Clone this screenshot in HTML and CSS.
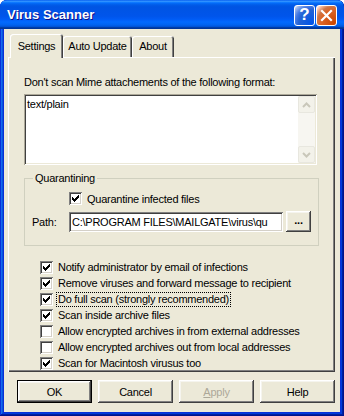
FILE: index.html
```html
<!DOCTYPE html>
<html lang="en">
<head>
    <meta charset="UTF-8">
    <title>Virus Scanner</title>
    <link rel="stylesheet" href="styles.css">
</head>
<body>
    <div class="window">
        <div class="titlebar">
            <span class="title">Virus Scanner</span>
            <div class="caption-buttons">
                <span class="cap-btn help">?</span>
                <span class="cap-btn close">
                    <svg width="19" height="19" viewBox="0 0 19 19"><path d="M5 5L14 14M14 5L5 14" stroke="#fff" stroke-width="2.2" stroke-linecap="square"/></svg>
                </span>
            </div>
        </div>
        <div class="client">
            <div class="tabs">
                <div class="tab selected tab-settings">Settings</div>
                <div class="tab tab-update">Auto Update</div>
                <div class="tab tab-about">About</div>
            </div>
            <div class="panel">
                <div class="label">Don't scan Mime attachements of the following format:</div>
                <div class="listbox">
                    <div class="list-text">text/plain</div>
                    <div class="scrollbar">
                        <span class="sb-btn"><svg width="9" height="6" viewBox="0 0 9 6"><path d="M1 5L4.5 1.5L8 5" fill="none" stroke="#c9c7ba" stroke-width="2"/></svg></span>
                        <span class="sb-track"></span>
                        <span class="sb-btn"><svg width="9" height="6" viewBox="0 0 9 6"><path d="M1 1L4.5 4.5L8 1" fill="none" stroke="#c9c7ba" stroke-width="2"/></svg></span>
                    </div>
                </div>
                <fieldset class="group">
                    <legend>Quarantining</legend>
                    <div class="check-row indent">
                        <span class="check"><svg width="13" height="13" viewBox="0 0 13 13"><path d="M3 5h1v3H3zM4 6h1v3H4zM5 7h1v3H5zM6 6h1v3H6zM7 5h1v3H7zM8 4h1v3H8zM9 3h1v3H9z"/></svg></span>
                        <span>Quarantine infected files</span>
                    </div>
                    <div class="path-row">
                        <span class="path-label">Path:</span>
                        <span class="edit">C:\PROGRAM FILES\MAILGATE\virus\qu</span>
                        <span class="btn small">...</span>
                    </div>
                </fieldset>
                <div class="options">
                    <div class="check-row">
                        <span class="check"><svg width="13" height="13" viewBox="0 0 13 13"><path d="M3 5h1v3H3zM4 6h1v3H4zM5 7h1v3H5zM6 6h1v3H6zM7 5h1v3H7zM8 4h1v3H8zM9 3h1v3H9z"/></svg></span>
                        <span>Notify administrator by email of infections</span>
                    </div>
                    <div class="check-row">
                        <span class="check"><svg width="13" height="13" viewBox="0 0 13 13"><path d="M3 5h1v3H3zM4 6h1v3H4zM5 7h1v3H5zM6 6h1v3H6zM7 5h1v3H7zM8 4h1v3H8zM9 3h1v3H9z"/></svg></span>
                        <span>Remove viruses and forward message to recipient</span>
                    </div>
                    <div class="check-row">
                        <span class="check"><svg width="13" height="13" viewBox="0 0 13 13"><path d="M3 5h1v3H3zM4 6h1v3H4zM5 7h1v3H5zM6 6h1v3H6zM7 5h1v3H7zM8 4h1v3H8zM9 3h1v3H9z"/></svg></span>
                        <span class="focused">Do full scan (strongly recommended)</span>
                    </div>
                    <div class="check-row">
                        <span class="check"><svg width="13" height="13" viewBox="0 0 13 13"><path d="M3 5h1v3H3zM4 6h1v3H4zM5 7h1v3H5zM6 6h1v3H6zM7 5h1v3H7zM8 4h1v3H8zM9 3h1v3H9z"/></svg></span>
                        <span>Scan inside archive files</span>
                    </div>
                    <div class="check-row">
                        <span class="check"></span>
                        <span>Allow encrypted archives in from external addresses</span>
                    </div>
                    <div class="check-row">
                        <span class="check"></span>
                        <span>Allow encrypted archives out from local addresses</span>
                    </div>
                    <div class="check-row">
                        <span class="check"><svg width="13" height="13" viewBox="0 0 13 13"><path d="M3 5h1v3H3zM4 6h1v3H4zM5 7h1v3H5zM6 6h1v3H6zM7 5h1v3H7zM8 4h1v3H8zM9 3h1v3H9z"/></svg></span>
                        <span>Scan for Macintosh virusus too</span>
                    </div>
                </div>
            </div>
            <div class="buttons">
                <span class="btn default">OK</span>
                <span class="btn">Cancel</span>
                <span class="btn disabled"><u>A</u>pply</span>
                <span class="btn">Help</span>
            </div>
        </div>
    </div>
</body>
</html>
```

FILE: styles.css
```css
body {
    margin: 0;
    background: #fff;
    font-family: "Liberation Sans", Arial, sans-serif;
    font-size: 11px;
    letter-spacing: -0.25px;
    color: #000;
}

.window {
    width: 344px;
    height: 416px;
    display: flex;
    flex-direction: column;
    background: #0831d9;
    border-radius: 7px 7px 0 0;
    box-shadow: inset -1px -1px #00138c, inset 1px 1px #0831d9, inset -2px -2px #001ea0, inset 2px 2px #166aee, inset -3px -3px #003bda, inset 3px 3px #0855dd;
}

.titlebar {
    height: 29px;
    flex: none;
    display: flex;
    align-items: center;
    justify-content: space-between;
    padding: 0 7px 0 7px;
    border-radius: 7px 7px 0 0;
    background: linear-gradient(to bottom, #0058ee 0%, #3593ff 4%, #288eff 6%, #127dff 8%, #036ffc 10%, #0262ee 14%, #0057e5 20%, #0054e3 24%, #0055eb 56%, #005bf5 66%, #026afe 76%, #0062ef 86%, #0052d6 92%, #0040ab 94%, #003092 100%);
}

.title {
    color: #fff;
    font-weight: bold;
    font-size: 13px;
    text-shadow: 1px 1px #0f1089;
    letter-spacing: 0;
}

.caption-buttons {
    display: flex;
    gap: 1px;
    margin-top: 1px;
}

.cap-btn {
    width: 21px;
    height: 21px;
    box-sizing: border-box;
    border: 1px solid #fff;
    border-radius: 3px;
    display: flex;
    align-items: center;
    justify-content: center;
    color: #fff;
    font-weight: bold;
    font-size: 17px;
    letter-spacing: 0;
}

.help {
    background: radial-gradient(circle at 90% 90%, #0054e9 0%, #2263d5 55%, #4479e4 70%, #a3bbec 90%, #fff 100%);
}

.close {
    background: radial-gradient(circle at 90% 90%, #cc4600 0%, #dc6527 55%, #cd7546 70%, #ffccb2 90%, #fff 100%);
}

.client {
    flex: 1;
    margin: 0 4px 4px 4px;
    background: #ece9d8;
    display: flex;
    flex-direction: column;
}

.tabs {
    height: 28px;
    display: flex;
    align-items: flex-end;
    padding-left: 6px;
}

.tab {
    height: 21px;
    box-sizing: border-box;
    padding-top: 4px;
    text-align: center;
    border-radius: 3px 3px 0 0;
    box-shadow: inset 1px 1px #fff, inset -1px 0 #404040, inset -2px 0 #808080;
    background: #ece9d8;
}

.tab.selected {
    height: 24px;
    margin-bottom: -1px;
    padding-top: 6px;
    position: relative;
    z-index: 1;
}

.tab-settings {
    width: 53px;
}

.tab-update {
    width: 69px;
}

.tab-about {
    width: 42px;
}

.panel {
    margin: 0 5px 0 4px;
    padding: 19px 16px 1px 16px;
    box-shadow: inset 1px 1px #fff, inset -1px -1px #404040, inset -2px -2px #808080;
}

.label {
    line-height: 13px;
    height: 13px;
}

.listbox {
    margin-top: 5px;
    width: 293px;
    height: 71px;
    box-sizing: border-box;
    padding: 2px;
    display: flex;
    background: #fff;
    box-shadow: inset 1px 1px #aca899, inset -1px -1px #fff, inset 2px 2px #404040, inset -2px -2px #ece9d8;
}

.list-text {
    flex: 1;
    padding: 2px 1px;
    line-height: 13px;
}

.scrollbar {
    width: 17px;
    display: flex;
    flex-direction: column;
    background: #f7f6f1;
}

.sb-btn {
    height: 17px;
    box-sizing: border-box;
    border: 1px solid #e8e7df;
    border-radius: 2px;
    background: #f3f2ea;
    display: flex;
    align-items: center;
    justify-content: center;
}

.sb-track {
    flex: 1;
}

.group {
    margin: 7px 0 0 0;
    width: 293px;
    box-sizing: border-box;
    padding: 7px 7px 13px 7px;
    border: 1px solid #d0d0bf;
}

.group legend {
    margin-left: 1px;
    padding: 0 2px;
    line-height: 13px;
}

.check-row {
    height: 16px;
    display: flex;
    align-items: center;
    gap: 5px;
}

.group .check-row {
    height: 13px;
}

.check-row.indent {
    margin-left: 37px;
}

.check {
    width: 13px;
    height: 13px;
    flex: none;
    display: block;
    background: #fff;
    box-shadow: inset 1px 1px #808080, inset -1px -1px #fff, inset 2px 2px #404040, inset -2px -2px #d4d0c8;
}

.check svg {
    display: block;
}

.path-row {
    margin-top: 6px;
    display: flex;
    align-items: center;
}

.path-label {
    width: 37px;
}

.edit {
    width: 214px;
    height: 20px;
    box-sizing: border-box;
    padding: 4px 3px 0 3px;
    background: #fff;
    white-space: nowrap;
    overflow: hidden;
    box-shadow: inset 1px 1px #808080, inset -1px -1px #fff, inset 2px 2px #404040, inset -2px -2px #d4d0c8;
}

.options {
    margin-top: 13px;
    margin-left: 16px;
}

.focused {
    outline: 1px dotted #000;
    outline-offset: 0;
    padding: 0 1px;
    margin-left: -1px;
    line-height: 13px;
}

.buttons {
    display: flex;
    gap: 6px;
    padding: 8px 0 0 13px;
}

.btn {
    width: 75px;
    height: 23px;
    box-sizing: border-box;
    display: flex;
    align-items: center;
    justify-content: center;
    background: #ece9d8;
    box-shadow: inset -1px -1px #404040, inset 1px 1px #fff, inset -2px -2px #808080, inset 2px 2px #f5f4ee;
}

.btn.default {
    border: 1px solid #000;
}

.btn.disabled {
    color: #aca899;
}

.btn.small {
    width: 25px;
    height: 21px;
    margin-left: 3px;
    font-weight: bold;
    padding-bottom: 3px;
}
```
